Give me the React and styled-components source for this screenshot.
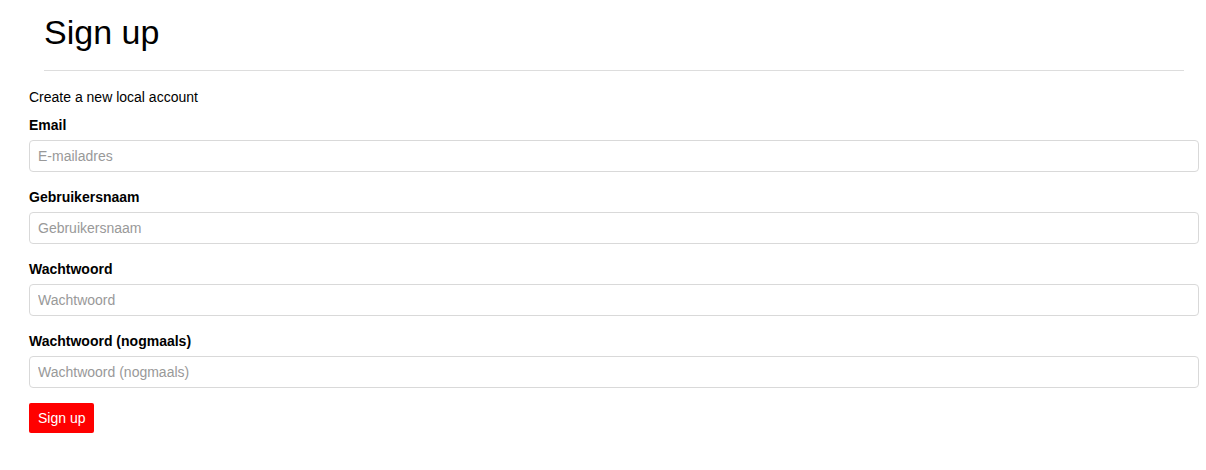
import React from 'react'
import styled, { createGlobalStyle } from 'styled-components'

const GlobalStyle = createGlobalStyle`
  body {
    margin: 0;
    font-family: "Liberation Sans", Arial, sans-serif;
    color: #000;
    background: #fff;
  }
`

const Page = styled.main`
  width: 1170px;
  padding-left: 29px;
`

const Header = styled.header`
  padding: 0 15px;
`

const Title = styled.h1`
  margin: 12px 0 0;
  font-size: 34px;
  font-weight: 400;
  line-height: 41px;
`

const Divider = styled.hr`
  margin: 17px 0 0;
  border: 0;
  border-top: 1px solid #ddd;
`

const Intro = styled.p`
  margin: 18px 0 12px;
  font-size: 14px;
  line-height: 16px;
`

const Form = styled.form`
  display: flex;
  flex-direction: column;
`

const Field = styled.div`
  display: flex;
  flex-direction: column;
  gap: 7px;
  margin-bottom: 17px;
`

const Label = styled.label`
  font-size: 14px;
  font-weight: 700;
  line-height: 16px;
`

const Input = styled.input`
  box-sizing: border-box;
  width: 100%;
  height: 32px;
  padding: 0 8px;
  border: 1px solid #d9d9d9;
  border-radius: 4px;
  font-family: inherit;
  font-size: 14px;
  color: #333;
  outline: none;

  &::placeholder {
    color: #999;
  }
`

const Button = styled.button`
  align-self: flex-start;
  margin-top: -2px;
  height: 30px;
  padding: 0 9px;
  border: 0;
  border-radius: 2px;
  background: #f00;
  color: #fff;
  font-family: inherit;
  font-size: 14px;
  cursor: pointer;
`

const fields = [
  { id: 'email', label: 'Email', placeholder: 'E-mailadres', type: 'email' },
  { id: 'username', label: 'Gebruikersnaam', placeholder: 'Gebruikersnaam', type: 'text' },
  { id: 'password', label: 'Wachtwoord', placeholder: 'Wachtwoord', type: 'password' },
  { id: 'password2', label: 'Wachtwoord (nogmaals)', placeholder: 'Wachtwoord (nogmaals)', type: 'password' },
]

const App = () => {
  return (
    <>
      <GlobalStyle />
      <Page>
        <Header>
          <Title>Sign up</Title>
          <Divider />
        </Header>
        <Intro>Create a new local account</Intro>
        <Form onSubmit={(e) => e.preventDefault()}>
          {fields.map((f) => (
            <Field key={f.id}>
              <Label htmlFor={f.id}>{f.label}</Label>
              <Input id={f.id} type={f.type} placeholder={f.placeholder} />
            </Field>
          ))}
          <Button type="submit">Sign up</Button>
        </Form>
      </Page>
    </>
  )
}

export default App
